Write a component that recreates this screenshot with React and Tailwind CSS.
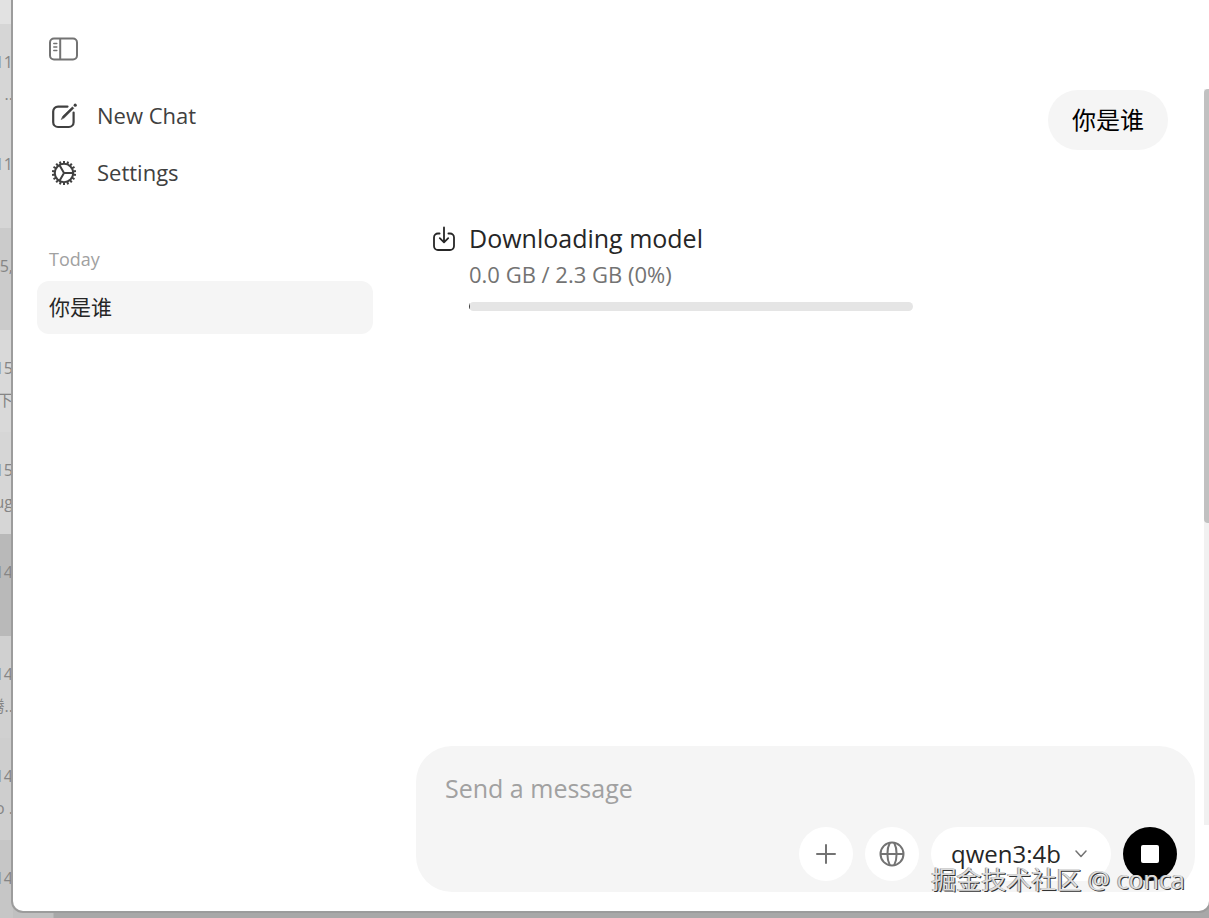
import React, { useState } from 'react';

const backdropRows = [
    { time: '11', preview: '..', tone: 'bg-[#d6d6d6]' },
    { time: '11', preview: '', tone: 'bg-[#d6d6d6]' },
    { time: '05,', preview: '', tone: 'bg-[#cbcbcb]' },
    { time: '15', preview: '下', tone: 'bg-[#d9d9d9]' },
    { time: '15', preview: 'ug', tone: 'bg-[#d6d6d6]' },
    { time: '14', preview: '', tone: 'bg-[#b9b9b9]' },
    { time: '14', preview: '腾..', tone: 'bg-[#d0d0d0]' },
    { time: '14', preview: 'o .', tone: 'bg-[#cecece]' },
    { time: '14', preview: '', tone: 'bg-[#c6c6c6]' },
];

const chats = [{ id: 1, title: '你是谁' }];

function SidebarIcon() {
    return (
        <svg width="30" height="24" viewBox="0 0 30 24" fill="none" stroke="currentColor" strokeWidth="2" strokeLinecap="round">
            <rect x="1" y="1.5" width="27" height="21" rx="4" />
            <path d="M11.2 2v20" />
            <path d="M4.8 6.6h3M4.8 10h3M4.8 13.4h3" strokeWidth="1.5" />
        </svg>
    );
}

function ComposeIcon() {
    return (
        <svg width="28" height="28" viewBox="0 0 28 28" fill="none" stroke="currentColor" strokeWidth="2.2" strokeLinecap="round">
            <path d="M17.5 4.6H8A4.8 4.8 0 0 0 3.2 9.400v10.800A4.800 4.800 0 0 0 8 25h10.800a4.800 4.800 0 0 0 4.800-4.800V10.500" />
            <path d="M11.300 17.300l1.500-3.200 9.600-9.300 1.500 1.500-9.500 9.500z" fill="currentColor" strokeWidth="0.5" strokeLinejoin="round" />
            <circle cx="25.200" cy="3.200" r="1.600" fill="currentColor" stroke="none" />
        </svg>
    );
}

function GearIcon() {
    const teeth = Array.from({ length: 18 }, (_, i) => i * 20);
    return (
        <svg width="28" height="28" viewBox="0 0 28 28" fill="none" stroke="currentColor" strokeWidth="2">
            <circle cx="14" cy="14" r="9.2" />
            <path d="M14 14h9M14 14L9.4 6M14 14L9.4 22" />
            {teeth.map((deg) => (
                <path key={deg} d="M14 5V1.900" transform={`rotate(${deg} 14 14)`} />
            ))}
        </svg>
    );
}

function DownloadIcon() {
    return (
        <svg width="22" height="26" viewBox="0 0 22 26" fill="none" stroke="currentColor" strokeWidth="1.8" strokeLinecap="round" strokeLinejoin="round">
            <path d="M6.600 7.500H5a4 4 0 0 0-4 4V20a4 4 0 0 0 4 4h12a4 4 0 0 0 4-4v-8.500a4 4 0 0 0-4-4h-1.600" />
            <path d="M11 1.500v14.500M6.800 12.200L11 16.400l4.200-4.200" />
        </svg>
    );
}

function GlobeIcon() {
    return (
        <svg width="26" height="26" viewBox="0 0 26 26" fill="none" stroke="currentColor" strokeWidth="2">
            <circle cx="13" cy="13" r="11.500" />
            <path d="M10.800 1.800C7.600 8 7.600 18 10.800 24.200M15.200 1.800C18.400 8 18.400 18 15.200 24.200M1.500 13h23" />
        </svg>
    );
}

function Backdrop() {
    return (
        <div className="w-[13px] shrink-0 overflow-hidden bg-[#d0d0d0] text-[#858585] text-base" aria-hidden="true">
            <div className="h-6 bg-[#e2e2e2]" />
            {backdropRows.map((row, i) => (
                <div key={i} className={`h-[102px] pt-[26px] flex flex-col items-end ${row.tone}`}>
                    <span className="h-8 leading-6 whitespace-nowrap">{row.time}</span>
                    <span className="h-8 leading-6 whitespace-nowrap">{row.preview}</span>
                </div>
            ))}
        </div>
    );
}

function Sidebar() {
    return (
        <aside className="w-96 shrink-0 px-6 pt-[37px]">
            <button className="ml-3 block text-[#737373]" aria-label="Toggle sidebar">
                <SidebarIcon />
            </button>
            <nav className="mt-[26px] text-[22px] text-[#404040]">
                <button className="flex items-center h-[57px] w-full pl-[13px] gap-[19px]">
                    <ComposeIcon />
                    New Chat
                </button>
                <button className="flex items-center h-[57px] w-full pl-[13px] gap-[19px]">
                    <GearIcon />
                    Settings
                </button>
            </nav>
            <h2 className="mt-11 pl-3 text-[18px] leading-7 text-[#a1a1a1]">Today</h2>
            {chats.map((chat) => (
                <a key={chat.id} href="#" className="mt-2 flex items-center h-[53px] px-3 rounded-xl bg-[#f5f5f5] text-[21px] text-[#262626]">
                    {chat.title}
                </a>
            ))}
        </aside>
    );
}

function DownloadProgress({ done, total }) {
    const percent = Math.round((done / total) * 100);
    return (
        <div className="flex gap-3.5 mt-[68px] ml-[17px]">
            <div className="mt-2 text-[#262626]">
                <DownloadIcon />
            </div>
            <div className="w-[444px]">
                <p className="text-[25px] leading-10 text-[#262626]">Downloading model</p>
                <p className="text-[22px] leading-8 text-[#737373]">
                    {done.toFixed(1)} GB / {total.toFixed(1)} GB ({percent}%)
                </p>
                <div className="mt-3 h-[9px] rounded-full bg-[#e5e5e5] overflow-hidden">
                    <div className="h-full min-w-px bg-[#404040]" style={{ width: `${percent}%` }} />
                </div>
            </div>
        </div>
    );
}

function Composer() {
    const [message, setMessage] = useState('');

    return (
        <form className="h-[146px] rounded-[36px] bg-[#f5f5f5] pt-6 px-[18px] pb-[11px] flex flex-col justify-between" onSubmit={(e) => e.preventDefault()}>
            <input
                type="text"
                aria-label="Message"
                placeholder="Send a message"
                value={message}
                onChange={(e) => setMessage(e.target.value)}
                className="w-full px-[11px] bg-transparent text-[25px] leading-9 outline-none placeholder:text-[#a1a1a1]"
            />
            <div className="flex items-center justify-end gap-3">
                <button type="button" aria-label="Attach" className="size-[54px] rounded-full bg-white text-[#737373] flex items-center justify-center">
                    <svg width="20" height="20" viewBox="0 0 20 20" fill="none" stroke="currentColor" strokeWidth="2" strokeLinecap="round">
                        <path d="M10 1v18M1 10h18" />
                    </svg>
                </button>
                <button type="button" aria-label="Web search" className="size-[54px] rounded-full bg-white text-[#737373] flex items-center justify-center">
                    <GlobeIcon />
                </button>
                <button type="button" className="h-[54px] w-[180px] pl-5 rounded-full bg-white text-[#262626] text-2xl flex items-center gap-3.5">
                    qwen3:4b
                    <svg width="12" height="8" viewBox="0 0 12 8" fill="none" stroke="#737373" strokeWidth="1.5" strokeLinecap="round" strokeLinejoin="round">
                        <path d="M1 1l5 5.500L11 1" />
                    </svg>
                </button>
                <button type="button" aria-label="Stop" className="size-[54px] rounded-full bg-black flex items-center justify-center">
                    <span className="size-[18px] rounded-xs bg-white" />
                </button>
            </div>
        </form>
    );
}

export default function App() {
    return (
        <div className="relative h-screen flex overflow-hidden bg-[#c4c4c4] font-['Open_Sans','Noto_Sans_CJK_SC',sans-serif]">
            <Backdrop />
            <div className="flex-1 min-w-0 flex flex-col bg-[linear-gradient(to_right,#c0c0c0_40px,#a8a8a8_41px)]">
                <div className="flex-1 min-h-0 flex bg-white rounded-b-[10px] shadow-[0_0_0_2px_#9c9c9c]">
                    <Sidebar />
                    <main className="flex-1 min-w-0 flex flex-col pl-[19px] pr-[9px] pb-[19px]">
                        <div className="flex-1 pt-[90px]">
                            <div className="flex justify-end pr-[27px]">
                                <p className="h-[60px] px-6 rounded-full bg-[#f5f5f5] text-2xl leading-[60px] text-black">你是谁</p>
                            </div>
                            <DownloadProgress done={0} total={2.3} />
                        </div>
                        <Composer />
                    </main>
                    <div className="w-[5px] mt-[89px] mb-[86px] bg-[#f1f1f1]">
                        <div className="h-[59%] rounded-l-sm bg-[#c1c1c1]" />
                    </div>
                </div>
                <div className="h-[7px] shrink-0" />
            </div>
            <p className="absolute right-6 bottom-[21px] text-[25px] leading-9 text-[#dcdcdc] [text-shadow:1px_1px_0_#333,-1px_0_0_#999]">
                掘金技术社区 @ conca
            </p>
        </div>
    );
}
